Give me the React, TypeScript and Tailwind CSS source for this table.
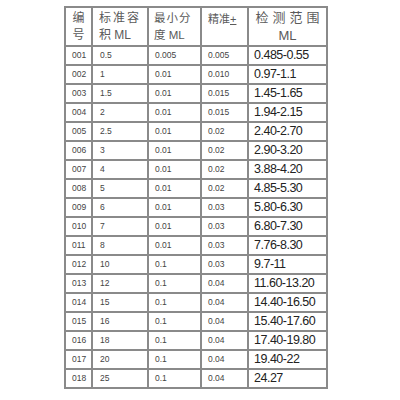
import React from 'react';

const rows: [string, string, string, string, string][] = [
  ['001', '0.5', '0.005', '0.005', '0.485-0.55'],
  ['002', '1', '0.01', '0.010', '0.97-1.1'],
  ['003', '1.5', '0.01', '0.015', '1.45-1.65'],
  ['004', '2', '0.01', '0.015', '1.94-2.15'],
  ['005', '2.5', '0.01', '0.02', '2.40-2.70'],
  ['006', '3', '0.01', '0.02', '2.90-3.20'],
  ['007', '4', '0.01', '0.02', '3.88-4.20'],
  ['008', '5', '0.01', '0.02', '4.85-5.30'],
  ['009', '6', '0.01', '0.03', '5.80-6.30'],
  ['010', '7', '0.01', '0.03', '6.80-7.30'],
  ['011', '8', '0.01', '0.03', '7.76-8.30'],
  ['012', '10', '0.1', '0.03', '9.7-11'],
  ['013', '12', '0.1', '0.04', '11.60-13.20'],
  ['014', '15', '0.1', '0.04', '14.40-16.50'],
  ['015', '16', '0.1', '0.04', '15.40-17.60'],
  ['016', '18', '0.1', '0.04', '17.40-19.80'],
  ['017', '20', '0.1', '0.04', '19.40-22'],
  ['018', '25', '0.1', '0.04', '24.27'],
];

const cell = 'border-2 border-[#8a8a8a] p-0';
const cjk = { fontFamily: '"Liberation Sans", "Noto Sans CJK SC", sans-serif' };

export default function App() {
  return (
    <div className="w-[400px] h-[400px] bg-white overflow-hidden pt-[6px] pl-[64px]" style={cjk}>
      <table className="table-fixed border-collapse w-[262px]">
        <colgroup>
          <col className="w-[27px]" />
          <col className="w-[56px]" />
          <col className="w-[53px]" />
          <col className="w-[47px]" />
          <col className="w-[79px]" />
        </colgroup>
        <thead>
          <tr className="h-[39px] text-[#5a5a5a] text-[12px] leading-[17px] whitespace-nowrap">
            <th className={`${cell} font-normal align-top pt-[2px] text-center`}>
              <div>编</div>
              <div>号</div>
            </th>
            <th className={`${cell} font-normal align-top pt-[2px] pl-[6px] text-left`}>
              <div className="tracking-[2px]">标准容</div>
              <div>积 ML</div>
            </th>
            <th className={`${cell} font-normal align-top pt-[2px] pl-[5px] text-left text-[11.5px]`}>
              <div className="tracking-[1px]">最小分</div>
              <div>度 ML</div>
            </th>
            <th className={`${cell} font-normal align-top pt-[3px] pl-[6px] text-left text-[11px]`}>
              <div>
                精准<span className="underline">+</span>
              </div>
            </th>
            <th className={`${cell} font-normal align-top pt-[1px] text-center text-[13px] leading-[18px]`}>
              <div className="tracking-[4px] pl-[4px]">检测范围</div>
              <div>ML</div>
            </th>
          </tr>
        </thead>
        <tbody>
          {rows.map((r) => (
            <tr key={r[0]} className="h-[19px]">
              <td className={`${cell} text-[8.5px] text-[#444] pl-[6px]`}>{r[0]}</td>
              <td className={`${cell} text-[8.5px] text-[#444] pl-[7px]`}>{r[1]}</td>
              <td className={`${cell} text-[8.5px] text-[#444] pl-[6px]`}>{r[2]}</td>
              <td className={`${cell} text-[8.5px] text-[#444] pl-[6px]`}>{r[3]}</td>
              <td className={`${cell} text-[12.5px] leading-[15px] tracking-[-0.5px] text-[#222] pl-[5px]`}>{r[4]}</td>
            </tr>
          ))}
        </tbody>
      </table>
    </div>
  );
}
